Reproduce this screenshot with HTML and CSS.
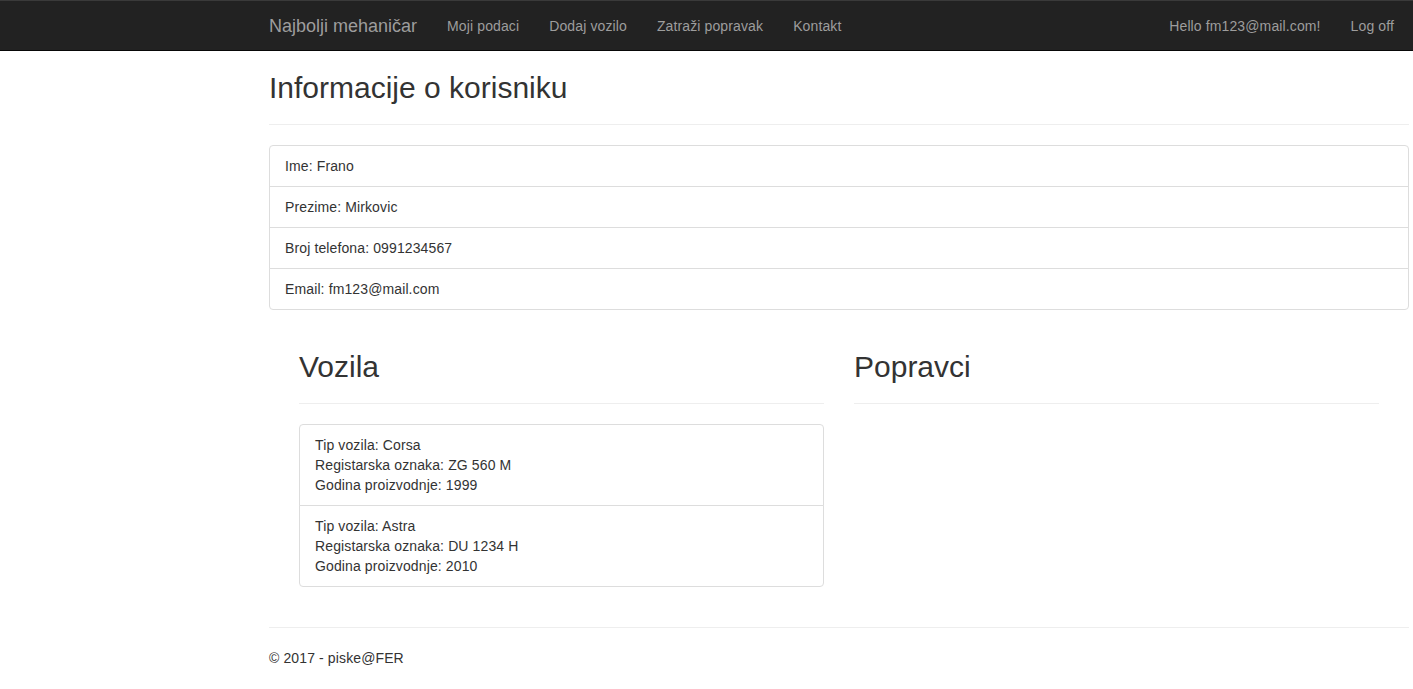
FILE: index.html
```html
<!DOCTYPE html>
<html lang="hr">
<head>
<meta charset="utf-8">
<title>Informacije o korisniku</title>
<link rel="stylesheet" href="styles.css">
</head>
<body>
<nav class="navbar">
  <div class="container nav-inner">
    <a class="brand" href="#">Najbolji mehaničar</a>
    <ul class="nav">
      <li><a href="#">Moji podaci</a></li>
      <li><a href="#">Dodaj vozilo</a></li>
      <li><a href="#">Zatraži popravak</a></li>
      <li><a href="#">Kontakt</a></li>
    </ul>
    <ul class="nav nav-right">
      <li><a href="#">Hello fm123@mail.com!</a></li>
      <li><a href="#">Log off</a></li>
    </ul>
  </div>
</nav>
<div class="container body-content">
  <h2>Informacije o korisniku</h2>
  <hr>
  <ul class="list-group">
    <li class="list-item">Ime: Frano</li>
    <li class="list-item">Prezime: Mirkovic</li>
    <li class="list-item">Broj telefona: 0991234567</li>
    <li class="list-item">Email: fm123@mail.com</li>
  </ul>
  <div class="cols">
    <div class="col">
      <h2>Vozila</h2>
      <hr>
      <ul class="list-group">
        <li class="list-item">Tip vozila: Corsa<br>Registarska oznaka: ZG 560 M<br>Godina proizvodnje: 1999</li>
        <li class="list-item">Tip vozila: Astra<br>Registarska oznaka: DU 1234 H<br>Godina proizvodnje: 2010</li>
      </ul>
    </div>
    <div class="col">
      <h2>Popravci</h2>
      <hr>
    </div>
  </div>
  <hr class="footer-hr">
  <footer>
    <p>© 2017 - piske@FER</p>
  </footer>
</div>
</body>
</html>
```
FILE: styles.css
```css
* { box-sizing: border-box; }
html, body { overflow-x: hidden; }
body {
  margin: 0;
  padding-top: 51px;
  padding-bottom: 20px;
  font-family: "Liberation Sans", Arial, Helvetica, sans-serif;
  font-size: 14px;
  line-height: 20px;
  letter-spacing: 0.12px;
  color: #333;
  background: #fff;
}
a { text-decoration: none; }
.container {
  width: 1170px;
  margin-left: 254px;
  padding: 0 15px;
}
.navbar {
  position: fixed;
  top: 0;
  left: 0;
  right: 0;
  height: 51px;
  background: #222;
  border-top: 1px solid #3a3a3a;
  border-bottom: 1px solid #080808;
  z-index: 10;
}
.nav-inner {
  display: flex;
  align-items: flex-start;
  height: 49px;
}
.brand {
  display: block;
  font-size: 18px;
  line-height: 20px;
  letter-spacing: 0;
  padding: 15px 15px 14px 0;
  color: #9d9d9d;
}
.nav {
  display: flex;
  list-style: none;
  margin: 0;
  padding: 0;
}
.nav a {
  display: block;
  padding: 15px 15px 14px;
  line-height: 20px;
  color: #9d9d9d;
}
.nav-right {
  margin-left: auto;
}
h2 {
  font-size: 30px;
  font-weight: 500;
  line-height: 33px;
  letter-spacing: 0;
  margin: 20px 0 10px;
}
hr {
  border: 0;
  border-top: 1px solid #eee;
  margin: 20px 0;
  height: 0;
}
.list-group {
  list-style: none;
  margin: 0 0 20px;
  padding: 0;
}
.list-item {
  padding: 10px 15px;
  border: 1px solid #ddd;
  margin-bottom: -1px;
  background: #fff;
}
.list-item:first-child { border-radius: 4px 4px 0 0; }
.list-item:last-child { border-radius: 0 0 4px 4px; margin-bottom: 0; }
.cols {
  display: grid;
  grid-template-columns: 1fr 1fr;
  padding: 0 15px;
}
.col {
  padding: 0 15px;
  display: flow-root;
}
.footer-hr { margin-top: 20px; }
footer p { margin: 0 0 10px; }
```
